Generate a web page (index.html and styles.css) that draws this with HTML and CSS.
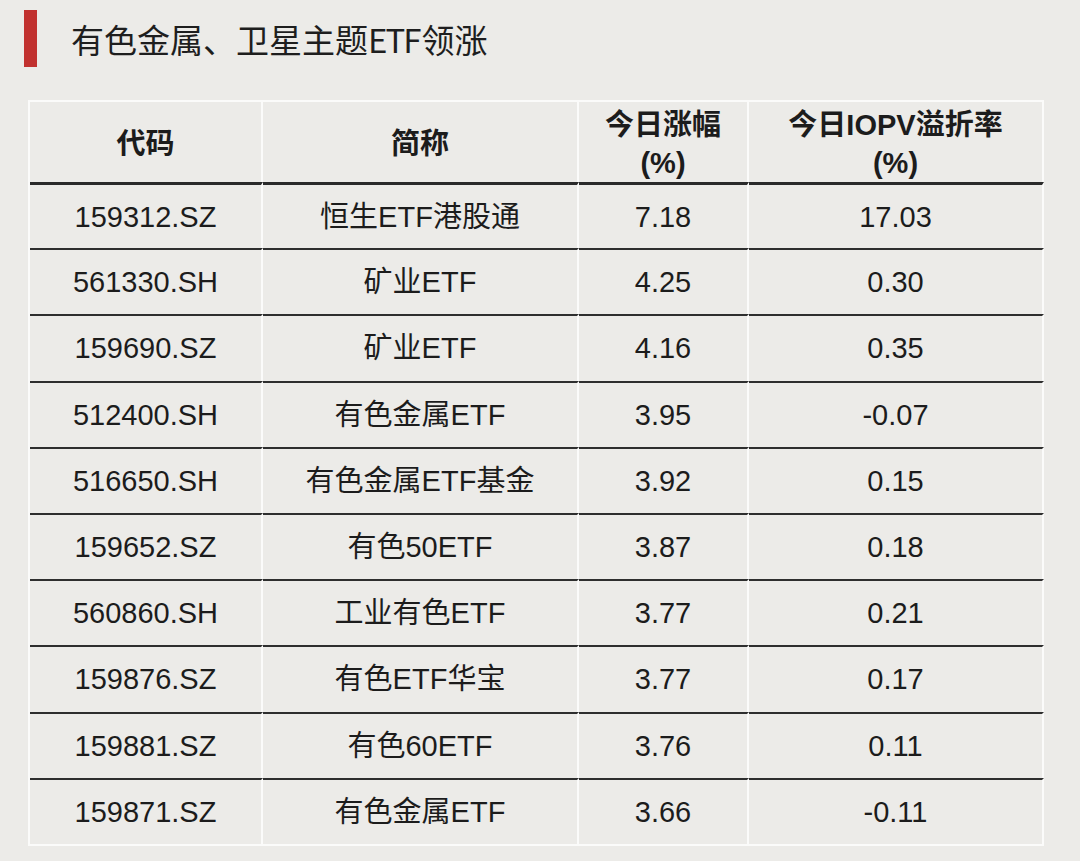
FILE: index.html
```html
<!DOCTYPE html>
<html lang="zh-CN">
<head>
<meta charset="utf-8">
<link rel="stylesheet" href="styles.css">
</head>
<body>
<div class="page">
  <div class="heading">
    <span class="bar"></span>
    <h1 class="title">有色金属、卫星主题<span class="latin">ETF</span>领涨</h1>
  </div>
  <table class="etf">
    <colgroup>
      <col class="c1"><col class="c2"><col class="c3"><col class="c4">
    </colgroup>
    <thead>
      <tr><th>代码</th><th>简称</th><th>今日涨幅<br>(%)</th><th>今日IOPV溢折率<br>(%)</th></tr>
    </thead>
    <tbody>
      <tr><td>159312.SZ</td><td>恒生ETF港股通</td><td>7.18</td><td>17.03</td></tr>
      <tr><td>561330.SH</td><td>矿业ETF</td><td>4.25</td><td>0.30</td></tr>
      <tr><td>159690.SZ</td><td>矿业ETF</td><td>4.16</td><td>0.35</td></tr>
      <tr><td>512400.SH</td><td>有色金属ETF</td><td>3.95</td><td>-0.07</td></tr>
      <tr><td>516650.SH</td><td>有色金属ETF基金</td><td>3.92</td><td>0.15</td></tr>
      <tr><td>159652.SZ</td><td>有色50ETF</td><td>3.87</td><td>0.18</td></tr>
      <tr><td>560860.SH</td><td>工业有色ETF</td><td>3.77</td><td>0.21</td></tr>
      <tr><td>159876.SZ</td><td>有色ETF华宝</td><td>3.77</td><td>0.17</td></tr>
      <tr><td>159881.SZ</td><td>有色60ETF</td><td>3.76</td><td>0.11</td></tr>
      <tr><td>159871.SZ</td><td>有色金属ETF</td><td>3.66</td><td>-0.11</td></tr>
    </tbody>
  </table>
</div>
</body>
</html>
```
FILE: styles.css
```css
html, body {
  margin: 0;
  padding: 0;
  background: #ecebe8;
}
.page {
  width: 1080px;
  height: 861px;
  overflow: hidden;
  background: #ecebe8;
  color: #1c1c1c;
}
.heading {
  display: flex;
  align-items: center;
  padding: 10px 0 0 24px;
  height: 57px;
}
.bar {
  display: block;
  width: 13px;
  height: 57px;
  background: #c1312f;
}
.title {
  margin: 0 0 0 34px;
  font-family: "Noto Sans CJK SC", "Liberation Sans", sans-serif;
  font-weight: 400;
  font-size: 33px;
  line-height: 40px;
  color: #1e1e1e;
  letter-spacing: 0;
}
.title .latin {
  letter-spacing: -2px;
  margin-right: 2px;
}
.etf {
  margin: 33px 0 0 28px;
  border-collapse: separate;
  border-spacing: 0;
  table-layout: fixed;
  width: 1016px;
  font-family: "Liberation Sans", "Noto Sans CJK SC", sans-serif;
  font-size: 29px;
  color: #1c1c1c;
  border-top: 2px solid #fbfbfa;
  border-bottom: 2px solid #fbfbfa;
  border-left: 2px solid #fbfbfa;
}
.c1 { width: 233px; }
.c2 { width: 316px; }
.c3 { width: 170px; }
.c4 { width: 295px; }
.etf th, .etf td {
  text-align: center;
  padding: 0;
  border-right: 2px solid #fbfbfa;
}
.etf th {
  height: 80px;
  padding-top: 3px;
  box-sizing: border-box;
  font-weight: 700;
  line-height: 38px;
  vertical-align: middle;
}
.etf td {
  height: 66.2px;
  box-sizing: border-box;
  line-height: 30px;
  border-top: 2px solid #2e2e2e;
}
.etf tbody tr:first-child td {
  border-top: 3px solid #2a2a2a;
}
```
